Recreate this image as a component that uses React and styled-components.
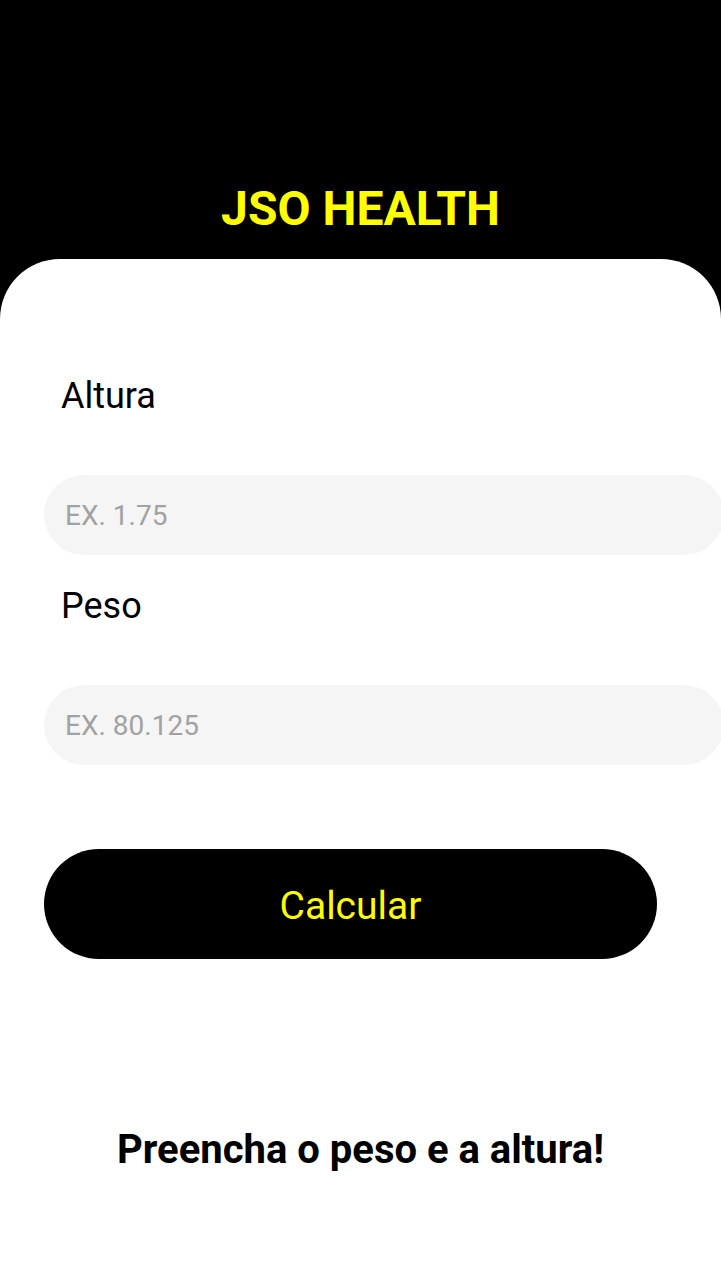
import React from "react";
import styled, { createGlobalStyle } from "styled-components";

const Global = createGlobalStyle`
  html, body { margin: 0; padding: 0; background: #000; }
  body { font-family: Roboto, "Liberation Sans", sans-serif; }
  * { box-sizing: border-box; }
`;

const Screen = styled.div`
  min-height: 100vh;
  display: flex;
  flex-direction: column;
  background: #000;
`;

const Header = styled.header`
  padding: 181px 0 22px;
  display: flex;
  justify-content: center;
`;

const Title = styled.h1`
  margin: 0;
  font-family: Roboto, "Liberation Sans", sans-serif;
  font-weight: 700;
  font-size: 48px;
  line-height: 56px;
  color: #ffff00;
`;

const Card = styled.main`
  flex: 1;
  background: #fff;
  border-radius: 60px 60px 0 0;
  padding: 116px 0 0 44px;
  display: flex;
  flex-direction: column;
`;

const Form = styled.form`
  display: flex;
  flex-direction: column;
`;

const Label = styled.label`
  margin: ${(p) => (p.$first ? "0" : "30px")} 0 58px 17px;
  font-size: 36px;
  line-height: 42px;
  color: #000;
`;

const Input = styled.input`
  width: 680px;
  height: 80px;
  border: none;
  outline: none;
  border-radius: 40px;
  background: #f5f5f5;
  padding: 0 21px;
  font-family: Roboto, "Liberation Sans", sans-serif;
  font-size: 28px;
  color: #000;
  &::placeholder { color: #a2a2a2; }
`;

const Button = styled.button`
  margin-top: 84px;
  width: 613px;
  height: 110px;
  border: none;
  border-radius: 55px;
  background: #000;
  color: #ffff00;
  font-family: Roboto, "Liberation Sans", sans-serif;
  font-size: 39px;
  padding-top: 4px;
  cursor: pointer;
`;

const Message = styled.p`
  margin: 167px 0 0 -44px;
  text-align: center;
  font-weight: 700;
  font-size: 40px;
  line-height: 47px;
  color: #000;
`;

export default function App() {
  return (
    <>
      <Global />
      <Screen>
        <Header>
          <Title>JSO HEALTH</Title>
        </Header>
        <Card>
          <Form onSubmit={(e) => e.preventDefault()}>
            <Label $first htmlFor="altura">Altura</Label>
            <Input id="altura" placeholder="EX. 1.75" inputMode="decimal" />
            <Label htmlFor="peso">Peso</Label>
            <Input id="peso" placeholder="EX. 80.125" inputMode="decimal" />
            <Button type="submit">Calcular</Button>
          </Form>
          <Message>Preencha o peso e a altura!</Message>
        </Card>
      </Screen>
    </>
  );
}
